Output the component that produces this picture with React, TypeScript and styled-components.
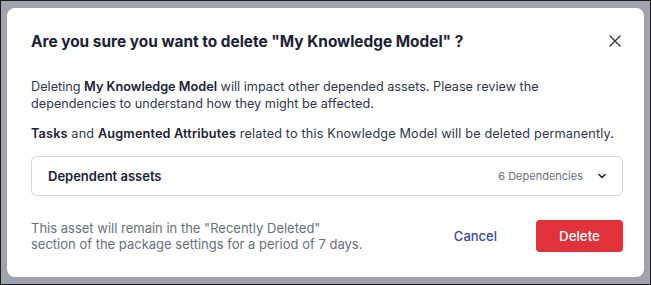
import React from 'react';
import styled, { createGlobalStyle } from 'styled-components';

const GlobalStyle = createGlobalStyle`
  html, body {
    margin: 0;
    padding: 0;
    height: 100%;
  }
  body {
    font-family: Inter, 'Noto Sans', sans-serif;
    background: #000;
  }
  #root {
    height: 100%;
  }
`;

const Backdrop = styled.div`
  box-sizing: border-box;
  height: 285px;
  width: 651px;
  border: 1px solid #1a1a1a;
  background: #a0a3ae;
  padding: 7px 6px 7px 6px;
  display: flex;
`;

const Modal = styled.div`
  flex: 1;
  background: #ffffff;
  border-radius: 8px;
  padding: 20px 21px 0 24px;
  display: flex;
  flex-direction: column;
`;

const Header = styled.div`
  display: flex;
  align-items: center;
  justify-content: space-between;
  height: 26px;
`;

const Title = styled.h2`
  margin: 0;
  font-size: 15.4px;
  font-weight: 700;
  color: #1a2234;
`;

const CloseButton = styled.button`
  border: none;
  background: none;
  padding: 0;
  margin-right: 1px;
  display: flex;
  color: #2b3446;
  cursor: pointer;
`;

const Text = styled.p`
  margin: 0;
  font-size: 12.7px;
  line-height: 17px;
  color: #2f3747;
  & b {
    font-weight: 600;
    color: #1a2234;
  }
`;

const Intro = styled(Text)`
  margin-top: 24px;
`;

const Warning = styled(Text)`
  margin-top: 13px;
  letter-spacing: 0.15px;
`;

const Accordion = styled.div`
  margin-top: 14px;
  height: 38px;
  border: 1px solid #d3d6dc;
  border-radius: 6px;
  display: flex;
  align-items: center;
  padding: 0 15px 0 16px;
`;

const AccordionTitle = styled.span`
  flex: 1;
  font-size: 13px;
  font-weight: 600;
  color: #1a2234;
`;

const Count = styled.span`
  font-size: 11px;
  color: #6b717c;
  margin-right: 14px;
`;

const Footer = styled.div`
  margin-top: 24px;
  display: flex;
  align-items: center;
`;

const Note = styled.p`
  flex: 1;
  margin: 0;
  font-size: 13px;
  line-height: 16px;
  color: #6a707b;
`;

const CancelButton = styled.button`
  border: none;
  background: none;
  font-family: inherit;
  font-size: 13px;
  font-weight: 500;
  color: #3446b0;
  padding: 0;
  margin-right: 39px;
  cursor: pointer;
`;

const DeleteButton = styled.button`
  border: none;
  border-radius: 4px;
  background: #e1323b;
  color: #ffffff;
  font-family: inherit;
  font-size: 13.3px;
  font-weight: 500;
  width: 87px;
  height: 32px;
  cursor: pointer;
`;

export default function App() {
  return (
    <>
      <GlobalStyle />
      <Backdrop>
        <Modal>
          <Header>
            <Title>Are you sure you want to delete "My Knowledge Model" ?</Title>
            <CloseButton aria-label="Close">
              <svg width="14" height="14" viewBox="0 0 14 14" fill="none">
                <path d="M2 2L12 12M12 2L2 12" stroke="currentColor" strokeWidth="1.4" strokeLinecap="round" />
              </svg>
            </CloseButton>
          </Header>
          <Intro>
            Deleting <b>My Knowledge Model</b> will impact other depended assets. Please review the
            <br />
            dependencies to understand how they might be affected.
          </Intro>
          <Warning>
            <b>Tasks</b> and <b>Augmented Attributes</b> related to this Knowledge Model will be deleted permanently.
          </Warning>
          <Accordion>
            <AccordionTitle>Dependent assets</AccordionTitle>
            <Count>6 Dependencies</Count>
            <svg width="10" height="10" viewBox="0 0 10 10" fill="none">
              <path d="M2 3.5L5 6.5L8 3.5" stroke="#1a2234" strokeWidth="1.6" strokeLinecap="round" strokeLinejoin="round" />
            </svg>
          </Accordion>
          <Footer>
            <Note>
              This asset will remain in the "Recently Deleted"
              <br />
              section of the package settings for a period of 7 days.
            </Note>
            <CancelButton>Cancel</CancelButton>
            <DeleteButton>Delete</DeleteButton>
          </Footer>
        </Modal>
      </Backdrop>
    </>
  );
}
